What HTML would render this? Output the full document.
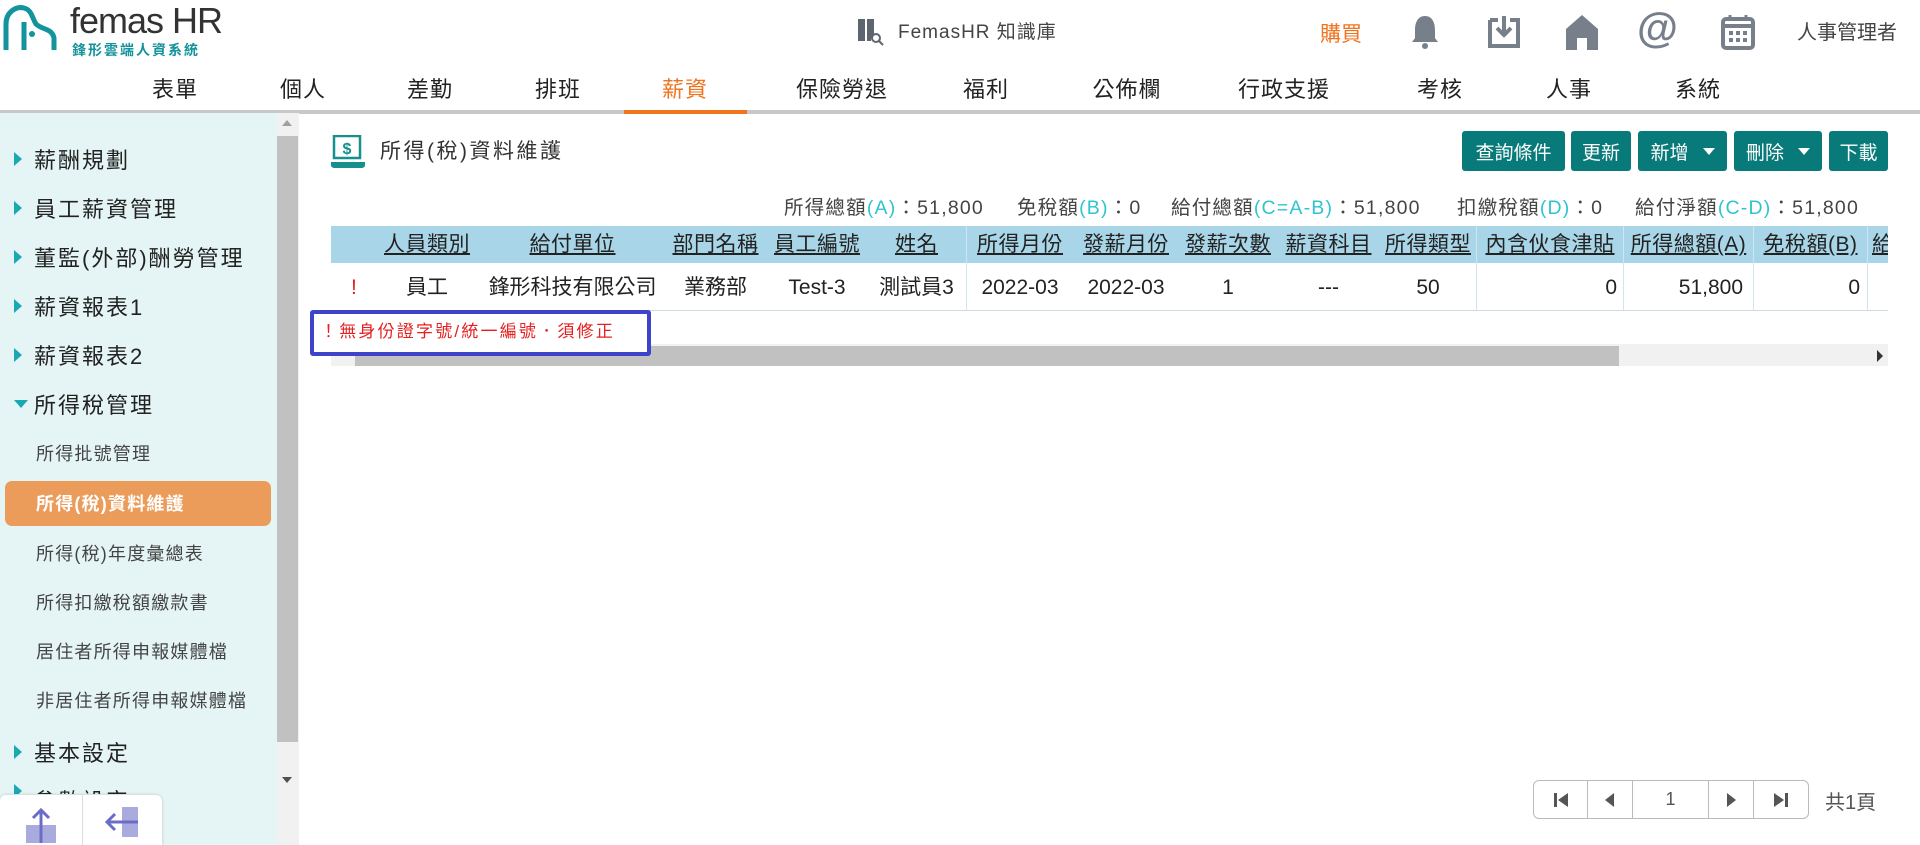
<!DOCTYPE html>
<html><head><meta charset="utf-8"><style>
*{margin:0;padding:0;box-sizing:border-box}
body{width:1920px;height:845px;overflow:hidden;background:#fff;font-family:"Liberation Sans","Noto Sans CJK TC",sans-serif;color:#333;position:relative}
.a{position:absolute;white-space:nowrap}
.nav{top:72px;font-size:22px;color:#222;width:120px;text-align:center;letter-spacing:1px}
.ico{top:12px;width:40px;height:40px}
.side{left:0;top:113px;width:277px;height:732px;background:#e5f5f5}
.mi{left:14px;font-size:22px;color:#222;display:flex;align-items:center;letter-spacing:2px}
.mi i{display:inline-block;width:0;height:0;border-top:7px solid transparent;border-bottom:7px solid transparent;border-left:8px solid #1aa8b4;margin-right:12px}
.si{left:36px;font-size:18px;color:#444;letter-spacing:1.2px}
.btn{top:131px;height:40px;background:#087a7a;color:#fff;font-size:19px;border-radius:3px;display:flex;align-items:center;justify-content:center}
.btn b{display:inline-block;border-left:6px solid transparent;border-right:6px solid transparent;border-top:7px solid #fff;margin-left:14px}
.sum{top:191px;font-size:19.5px;color:#444;letter-spacing:1.2px}
.sum span{color:#2ec4d0}
.th{top:0;height:37px;font-size:21px;color:#222;text-decoration:underline;text-align:center;line-height:37px;letter-spacing:0.5px}
.td{top:38px;height:47px;font-size:21px;color:#222;line-height:47px}
</style></head><body>
<!-- header -->
<svg class="a" style="left:2px;top:4px" width="62" height="52" viewBox="0 0 62 52"><path d="M4 46 V20 C4 8 14 2 22 4 C30 6 30 14 34 20 C40 26 50 24 52 34 V46" fill="none" stroke="#13939b" stroke-width="5"/><path d="M22 18 V46" stroke="#13939b" stroke-width="5"/><circle cx="30" cy="30" r="3" fill="#13939b"/></svg>
<div class="a" style="left:70px;top:0px;font-size:36px;color:#333;letter-spacing:-1px">femas HR</div>
<div class="a" style="left:72px;top:40px;font-size:14px;color:#13939b;letter-spacing:2px;font-weight:bold">鋒形雲端人資系統</div>
<svg class="a" style="left:856px;top:16px" width="28" height="30" viewBox="0 0 28 30"><path d="M2 3 h7 v22 h-7z M11 3 h7 v16 l-3 4 v2 h-4z" fill="#5d6670"/><circle cx="20" cy="22" r="4" fill="none" stroke="#5d6670" stroke-width="2"/><path d="M23 25 l4 4" stroke="#5d6670" stroke-width="2"/></svg>
<div class="a" style="left:898px;top:17px;font-size:19px;color:#444;letter-spacing:1px">FemasHR 知識庫</div>
<div class="a" style="left:1320px;top:18px;font-size:21px;color:#f0731e">購買</div>
<svg class="a ico" style="left:1405px" viewBox="0 0 40 40"><path d="M20 4 C12 4 10 12 10 18 V26 L7 30 H33 L30 26 V18 C30 12 28 4 20 4Z" fill="#77808a"/><circle cx="20" cy="34" r="3" fill="#77808a"/></svg>
<svg class="a ico" style="left:1484px" viewBox="0 0 40 40"><path d="M6 8 H14 M26 8 H34 V34 H6 V8" fill="none" stroke="#77808a" stroke-width="4"/><path d="M20 4 V22 M13 16 L20 23 L27 16" fill="none" stroke="#77808a" stroke-width="4"/></svg>
<svg class="a ico" style="left:1562px" viewBox="0 0 40 40"><path d="M20 3 L36 17 V38 H25 V26 H15 V38 H4 V17Z" fill="#77808a"/></svg>
<div class="a" style="left:1637px;top:4px;font-size:42px;font-weight:bold;color:#77808a">@</div>
<svg class="a ico" style="left:1718px" viewBox="0 0 40 40"><rect x="5" y="7" width="30" height="29" rx="3" fill="none" stroke="#77808a" stroke-width="4"/><path d="M5 14 H35" stroke="#77808a" stroke-width="4"/><path d="M12 3 V9 M28 3 V9" stroke="#77808a" stroke-width="3"/><g fill="#77808a"><rect x="11" y="19" width="4" height="4"/><rect x="18" y="19" width="4" height="4"/><rect x="25" y="19" width="4" height="4"/><rect x="11" y="26" width="4" height="4"/><rect x="18" y="26" width="4" height="4"/><rect x="25" y="26" width="4" height="4"/></g></svg>
<div class="a" style="left:1797px;top:16px;font-size:20px;color:#444">人事管理者</div>
<div class="a nav" style="left:115px">表單</div>
<div class="a nav" style="left:243px">個人</div>
<div class="a nav" style="left:370px">差勤</div>
<div class="a nav" style="left:498px">排班</div>
<div class="a nav" style="left:625px;color:#f0731e">薪資</div>
<div class="a nav" style="left:777px;width:130px">保險勞退</div>
<div class="a nav" style="left:926px">福利</div>
<div class="a nav" style="left:1067px">公佈欄</div>
<div class="a nav" style="left:1224px">行政支援</div>
<div class="a nav" style="left:1380px">考核</div>
<div class="a nav" style="left:1509px">人事</div>
<div class="a nav" style="left:1638px">系統</div>
<div class="a" style="left:0;top:110px;width:1920px;height:4px;background:#c8c8c8"></div>
<div class="a" style="left:624px;top:110px;width:123px;height:4px;background:#f0731e"></div>
<!-- sidebar -->
<div class="a side"></div>
<div class="a" style="left:277px;top:113px;width:22px;height:732px;background:#f1f1f1"></div>
<div class="a" style="left:277px;top:136px;width:21px;height:606px;background:#c1c1c1"></div>
<div class="a" style="left:282px;top:120px;border-left:5px solid transparent;border-right:5px solid transparent;border-bottom:6px solid #a0a0a0"></div>
<div class="a" style="left:282px;top:777px;border-left:5px solid transparent;border-right:5px solid transparent;border-top:6px solid #505050"></div>
<div class="a mi" style="top:143px"><i></i>薪酬規劃</div>
<div class="a mi" style="top:192px"><i></i>員工薪資管理</div>
<div class="a mi" style="top:241px"><i></i>董監(外部)酬勞管理</div>
<div class="a mi" style="top:290px"><i></i>薪資報表1</div>
<div class="a mi" style="top:339px"><i></i>薪資報表2</div>
<div class="a mi" style="top:388px"><i style="border-left:7px solid transparent;border-right:7px solid transparent;border-top:8px solid #1aa8b4;border-bottom:0;margin-right:6px"></i>所得稅管理</div>
<div class="a si" style="top:440px">所得批號管理</div>
<div class="a" style="left:5px;top:481px;width:266px;height:45px;background:#eb9c5a;border-radius:7px"></div>
<div class="a si" style="top:490px;color:#fff;font-weight:bold">所得(稅)資料維護</div>
<div class="a si" style="top:540px">所得(稅)年度彙總表</div>
<div class="a si" style="top:589px">所得扣繳稅額繳款書</div>
<div class="a si" style="top:638px">居住者所得申報媒體檔</div>
<div class="a si" style="top:687px">非居住者所得申報媒體檔</div>
<div class="a mi" style="top:736px"><i></i>基本設定</div>
<div class="a mi" style="top:784px;height:10px;overflow:hidden;align-items:flex-start"><i></i>參數設定</div>
<div class="a" style="left:0;top:795px;width:162px;height:50px;background:#fff;border-radius:6px 6px 0 0;box-shadow:0 0 3px rgba(0,0,0,.2)"></div>
<div class="a" style="left:82px;top:795px;width:1px;height:50px;background:#ddd"></div>
<svg class="a" style="left:25px;top:807px" width="32" height="36" viewBox="0 0 32 36"><rect x="1" y="18" width="30" height="18" fill="#a9abdf"/><path d="M16 36 V3 M8 11 L16 3 L24 11" fill="none" stroke="#6a6cc8" stroke-width="3"/></svg>
<svg class="a" style="left:104px;top:807px" width="36" height="32" viewBox="0 0 36 32"><rect x="18" y="0" width="16" height="30" fill="#a9abdf"/><path d="M34 15 H3 M11 7 L3 15 L11 23" fill="none" stroke="#6a6cc8" stroke-width="3"/></svg>
<!-- content -->
<svg class="a" style="left:331px;top:135px" width="34" height="34" viewBox="0 0 34 34"><rect x="3" y="1" width="26" height="22" fill="none" stroke="#16908f" stroke-width="2.5"/><text x="16" y="19" font-size="16" font-weight="bold" text-anchor="middle" fill="#16908f" font-family="Liberation Sans">$</text><path d="M0 27 H34 V30 Q34 33 30 33 H4 Q0 33 0 30Z" fill="#16908f"/></svg>
<div class="a" style="left:380px;top:135px;font-size:21px;color:#333;letter-spacing:2.5px">所得(稅)資料維護</div>
<div class="a btn" style="left:1462px;width:103px">查詢條件</div>
<div class="a btn" style="left:1571px;width:60px">更新</div>
<div class="a btn" style="left:1638px;width:89px">新增<b></b></div>
<div class="a btn" style="left:1734px;width:88px">刪除<b></b></div>
<div class="a btn" style="left:1829px;width:59px">下載</div>
<div class="a sum" style="left:784px">所得總額<span>(A)</span>：51,800</div>
<div class="a sum" style="left:1017px">免稅額<span>(B)</span>：0</div>
<div class="a sum" style="left:1171px">給付總額<span>(C=A-B)</span>：51,800</div>
<div class="a sum" style="left:1457px">扣繳稅額<span>(D)</span>：0</div>
<div class="a sum" style="left:1635px">給付淨額<span>(C-D)</span>：51,800</div>
<div class="a" style="left:331px;top:226px;width:1557px;height:140px;overflow:hidden">
 <div class="a" style="left:0;top:0;width:1557px;height:37px;background:#a8d6e8"></div>
 <div class="a" style="left:0;top:84px;width:1557px;height:1px;background:#cfdde3"></div>
 <div class="a" style="left:635px;top:0;width:1px;height:84px;background:#cfe6ee"></div>
 <div class="a" style="left:1145px;top:0;width:1px;height:84px;background:#cfe6ee"></div>
 <div class="a" style="left:1292px;top:0;width:1px;height:84px;background:#cfe6ee"></div>
 <div class="a" style="left:1536px;top:0;width:1px;height:84px;background:#cfe6ee"></div>
 <div class="a" style="left:1422px;top:0;width:1px;height:84px;background:#cfe6ee"></div>
 <div class="a th" style="left:42px;width:108px">人員類別</div>
 <div class="a th" style="left:150px;width:183px">給付單位</div>
 <div class="a th" style="left:333px;width:103px">部門名稱</div>
 <div class="a th" style="left:436px;width:100px">員工編號</div>
 <div class="a th" style="left:536px;width:99px">姓名</div>
 <div class="a th" style="left:635px;width:108px">所得月份</div>
 <div class="a th" style="left:743px;width:104px">發薪月份</div>
 <div class="a th" style="left:847px;width:100px">發薪次數</div>
 <div class="a th" style="left:947px;width:101px">薪資科目</div>
 <div class="a th" style="left:1048px;width:98px">所得類型</div>
 <div class="a th" style="left:1146px;width:146px">內含伙食津貼</div>
 <div class="a th" style="left:1293px;width:129px">所得總額(A)</div>
 <div class="a th" style="left:1423px;width:113px">免稅額(B)</div>
 <div class="a th" style="left:1537px;width:40px;text-align:left;padding-left:4px">給付</div>
 <div class="a td" style="left:20px;color:#e02020">!</div>
 <div class="a td" style="left:42px;width:108px;text-align:center">員工</div>
 <div class="a td" style="left:150px;width:183px;text-align:center">鋒形科技有限公司</div>
 <div class="a td" style="left:333px;width:103px;text-align:center">業務部</div>
 <div class="a td" style="left:436px;width:100px;text-align:center">Test-3</div>
 <div class="a td" style="left:536px;width:99px;text-align:center">測試員3</div>
 <div class="a td" style="left:635px;width:108px;text-align:center">2022-03</div>
 <div class="a td" style="left:743px;width:104px;text-align:center">2022-03</div>
 <div class="a td" style="left:847px;width:100px;text-align:center">1</div>
 <div class="a td" style="left:947px;width:101px;text-align:center">---</div>
 <div class="a td" style="left:1048px;width:98px;text-align:center">50</div>
 <div class="a td" style="left:1146px;width:140px;text-align:right">0</div>
 <div class="a td" style="left:1293px;width:119px;text-align:right">51,800</div>
 <div class="a td" style="left:1423px;width:106px;text-align:right">0</div>
 <div class="a" style="left:0;top:118px;width:1557px;height:22px;background:#f1f1f1"></div>
 <div class="a" style="left:24px;top:120px;width:1264px;height:20px;background:#c1c1c1"></div>
 <div class="a" style="left:1546px;top:124px;border-top:6px solid transparent;border-bottom:6px solid transparent;border-left:6px solid #333"></div>
</div>
<div class="a" style="left:310px;top:310px;width:341px;height:46px;border:4px solid #3e44c9;border-radius:3px;background:#fff"></div>
<div class="a" style="left:320px;top:317px;font-size:17px;color:#e52020;letter-spacing:2.2px">！無身份證字號/統一編號．須修正</div>
<!-- pagination -->
<div class="a" style="left:1533px;top:780px;width:276px;height:39px;border:1px solid #bbb;border-radius:6px;display:flex">
 <div style="width:54px;border-right:1px solid #bbb;display:flex;align-items:center;justify-content:center"><svg width="16" height="16"><rect x="1" y="1" width="3" height="14" fill="#555"/><path d="M15 1 V15 L5 8Z" fill="#555"/></svg></div>
 <div style="width:45px;border-right:1px solid #bbb;display:flex;align-items:center;justify-content:center"><svg width="12" height="16"><path d="M10 1 V15 L1 8Z" fill="#555"/></svg></div>
 <div style="width:76px;border-right:1px solid #bbb;text-align:center;line-height:37px;font-size:18px;color:#555">1</div>
 <div style="width:45px;border-right:1px solid #bbb;display:flex;align-items:center;justify-content:center"><svg width="12" height="16"><path d="M2 1 V15 L11 8Z" fill="#555"/></svg></div>
 <div style="flex:1;display:flex;align-items:center;justify-content:center"><svg width="16" height="16"><path d="M1 1 V15 L11 8Z" fill="#555"/><rect x="12" y="1" width="3" height="14" fill="#555"/></svg></div>
</div>
<div class="a" style="left:1825px;top:786px;font-size:20px;color:#555">共1頁</div>
</body></html>
